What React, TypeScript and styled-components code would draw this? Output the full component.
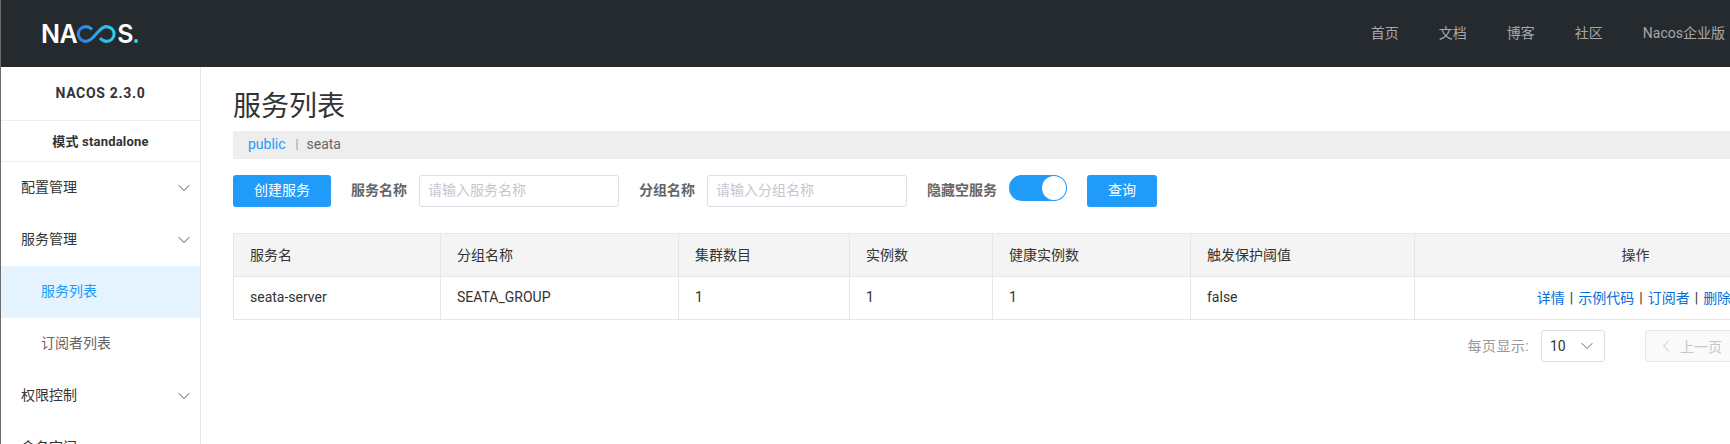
import { createGlobalStyle, styled } from "styled-components";
import { ChevronDown, ChevronLeft } from "lucide-react";

const FONT = `Roboto, "Noto Sans CJK SC", sans-serif`;

const menu = [
  { label: "配置管理" },
  {
    label: "服务管理",
    children: [
      { label: "服务列表", active: true },
      { label: "订阅者列表" },
    ],
  },
  { label: "权限控制" },
  { label: "命名空间" },
];

const navLinks = ["首页", "文档", "博客", "社区", "Nacos企业版"];

const columns = [
  { title: "服务名", width: 207, value: "seata-server" },
  { title: "分组名称", width: 238, value: "SEATA_GROUP" },
  { title: "集群数目", width: 171, value: "1" },
  { title: "实例数", width: 143, value: "1" },
  { title: "健康实例数", width: 198, value: "1" },
  { title: "触发保护阈值", width: 224, value: "false" },
];

const actions = ["详情", "示例代码", "订阅者", "删除"];

const App = () => {
  return (
    <>
      <GlobalStyle />
      <Page>
        <Header>
          <Logo>
            NA
            <svg width="42" height="18" viewBox="0 0 46 20" fill="none">
              <defs>
                <linearGradient id="loop" x1="0" x2="1" y1="0" y2="0">
                  <stop offset="0" stopColor="#2a7ff0" />
                  <stop offset="1" stopColor="#2fd0e6" />
                </linearGradient>
              </defs>
              <path
                d="M17.5 5C15.5 3 13.4 1.8 10.6 1.8 6 1.8 2.2 5.4 2.2 10s3.8 8.2 8.4 8.2c3.6 0 6-2.2 8.4-4.8l5.6-6.2C27.2 4.4 29.6 1.8 33.6 1.8c4.6 0 8.4 3.6 8.4 8.2s-3.8 8.2-8.4 8.2c-3.2 0-5.4-1.6-7.4-3.6"
                stroke="url(#loop)"
                strokeWidth="3.4"
              />
            </svg>
            S<LogoDot />
          </Logo>
          <Nav>
            {navLinks.map((link) => (
              <NavLink key={link}>{link}</NavLink>
            ))}
          </Nav>
        </Header>
        <Body>
          <Sidebar>
            <Version>NACOS 2.3.0</Version>
            <Mode>模式 standalone</Mode>
            {menu.map((item) => (
              <div key={item.label}>
                <MenuItem>
                  {item.label}
                  <ChevronDown size={20} strokeWidth={1.2} color="#555" />
                </MenuItem>
                {item.children?.map((child) => (
                  <SubItem key={child.label} $active={child.active}>
                    {child.label}
                  </SubItem>
                ))}
              </div>
            ))}
          </Sidebar>
          <Main>
            <Title>服务列表</Title>
            <Crumbs>
              <CrumbLink>public</CrumbLink>
              <CrumbSep>|</CrumbSep>
              <span>seata</span>
            </Crumbs>
            <Toolbar>
              <Button $width={98}>创建服务</Button>
              <FieldLabel>服务名称</FieldLabel>
              <SearchInput placeholder="请输入服务名称" />
              <FieldLabel>分组名称</FieldLabel>
              <SearchInput placeholder="请输入分组名称" />
              <FieldLabel>隐藏空服务</FieldLabel>
              <Switch>
                <Knob />
              </Switch>
              <Button $width={70}>查询</Button>
            </Toolbar>
            <Table>
              <colgroup>
                {columns.map((col) => (
                  <col key={col.title} width={col.width} />
                ))}
                <col width={442} />
              </colgroup>
              <thead>
                <tr>
                  {columns.map((col) => (
                    <HeadCell key={col.title}>{col.title}</HeadCell>
                  ))}
                  <HeadCell $center>操作</HeadCell>
                </tr>
              </thead>
              <tbody>
                <tr>
                  {columns.map((col) => (
                    <Cell key={col.title}>{col.value}</Cell>
                  ))}
                  <ActionCell>
                    {actions.map((action, index) => (
                      <span key={action}>
                        {index > 0 && <ActionSep>|</ActionSep>}
                        <ActionLink>{action}</ActionLink>
                      </span>
                    ))}
                  </ActionCell>
                </tr>
              </tbody>
            </Table>
            <Pagination>
              <PageLabel>每页显示:</PageLabel>
              <PageSize>
                10
                <ChevronDown size={20} strokeWidth={1.2} color="#666" />
              </PageSize>
              <PrevButton>
                <ChevronLeft size={20} strokeWidth={1.2} color="#c4c6cf" />
                上一页
              </PrevButton>
            </Pagination>
          </Main>
        </Body>
      </Page>
    </>
  );
};

const GlobalStyle = createGlobalStyle`
  html, body {
    margin: 0;
    height: 100%;
    overflow: hidden;
    background: #fff;
  }
  * {
    box-sizing: border-box;
  }
  input::placeholder {
    color: #c4c6cf;
  }
`;

const Page = styled.div`
  width: 1730px;
  height: 444px;
  overflow: hidden;
  border-left: 1px solid #6b6b6b;
  font-family: ${FONT};
  font-size: 14px;
  color: #333;
`;

const Header = styled.header`
  height: 67px;
  display: flex;
  align-items: center;
  justify-content: space-between;
  padding: 0 5px 0 40px;
  background-color: #252a2f;
`;

const Logo = styled.div`
  display: flex;
  align-items: center;
  font-family: Inter, sans-serif;
  font-size: 25px;
  font-weight: 600;
  letter-spacing: -0.5px;
  color: #fff;
  svg {
    margin: 0 -1px 0 -1px;
  }
`;

const LogoDot = styled.i`
  width: 4px;
  height: 4px;
  margin: 14px 0 0 1px;
  border-radius: 50%;
  background-color: #2fd0e6;
`;

const Nav = styled.nav`
  display: flex;
  gap: 40px;
  padding-bottom: 4px;
`;

const NavLink = styled.a`
  color: #a8a8a8;
  font-size: 14px;
`;

const Body = styled.div`
  display: flex;
  height: 377px;
`;

const Sidebar = styled.aside`
  flex: 0 0 200px;
  border-right: 1px solid #e6e6e6;
`;

const Version = styled.div`
  height: 54px;
  display: flex;
  align-items: center;
  justify-content: center;
  padding-bottom: 2px;
  border-bottom: 1px solid #eee;
  font-weight: 700;
  font-size: 14px;
  letter-spacing: 0.7px;
`;

const Mode = styled(Version)`
  height: 41px;
  font-size: 13px;
  letter-spacing: 0.2px;
`;

const MenuItem = styled.div`
  height: 52px;
  display: flex;
  align-items: center;
  justify-content: space-between;
  padding: 0 6px 4px 20px;
  font-size: 14px;
  svg {
    margin-top: 4px;
  }
`;

const SubItem = styled.div<{ $active?: boolean }>`
  height: 52px;
  display: flex;
  align-items: center;
  padding: 0 0 4px 40px;
  color: ${(props) => (props.$active ? "#209bfa" : "#666")};
  background-color: ${(props) => (props.$active ? "#e4f3fe" : "transparent")};
`;

const Main = styled.main`
  flex: 0 0 auto;
  width: 1655px;
  padding-left: 32px;
`;

const Title = styled.h1`
  height: 64px;
  margin: 0;
  display: flex;
  align-items: center;
  padding-top: 10px;
  font-size: 28px;
  font-weight: 400;
`;

const Crumbs = styled.div`
  height: 28px;
  display: flex;
  align-items: center;
  padding: 0 0 2px 15px;
  background-color: #eee;
  color: #666;
`;

const CrumbLink = styled.a`
  color: #209bfa;
`;

const CrumbSep = styled.span`
  margin: 0 8px 0 10px;
  color: #999;
  font-size: 12px;
`;

const Toolbar = styled.div`
  display: flex;
  align-items: flex-start;
  gap: 12px;
  margin-top: 16px;
`;

const Button = styled.button<{ $width: number }>`
  width: ${(props) => props.$width}px;
  height: 32px;
  margin-right: 8px;
  padding: 0 0 4px;
  border: none;
  border-radius: 3px;
  background-color: #209bfa;
  color: #fff;
  font-family: ${FONT};
  font-size: 14px;
`;

const FieldLabel = styled.label`
  line-height: 30px;
  font-weight: 700;
  color: #666;
`;

const SearchInput = styled.input`
  width: 200px;
  height: 32px;
  margin-right: 8px;
  padding: 0 8px 2px;
  border: 1px solid #dcdee3;
  border-radius: 3px;
  font-family: ${FONT};
  font-size: 14px;
  outline: none;
`;

const Switch = styled.div`
  width: 58px;
  height: 26px;
  margin-right: 8px;
  display: flex;
  align-items: center;
  justify-content: flex-end;
  padding-right: 1px;
  border-radius: 13px;
  background-color: #209bfa;
`;

const Knob = styled.span`
  width: 24px;
  height: 24px;
  border-radius: 50%;
  background-color: #fff;
`;

const Table = styled.table`
  width: 1623px;
  margin-top: 26px;
  table-layout: fixed;
  border-collapse: collapse;
  border: 1px solid #e6e6e6;
`;

const HeadCell = styled.th<{ $center?: boolean }>`
  height: 43px;
  padding: 0 16px 3px;
  border: 1px solid #e6e6e6;
  background-color: #f4f4f4;
  font-weight: 400;
  text-align: ${(props) => (props.$center ? "center" : "left")};
`;

const Cell = styled.td`
  height: 43px;
  padding: 0 16px 3px;
  border: 1px solid #e6e6e6;
  text-align: left;
`;

const ActionCell = styled(Cell)`
  padding-right: 19px;
  text-align: center;
`;

const ActionLink = styled.a`
  color: #0a6ed8;
`;

const ActionSep = styled.span`
  margin: 0 5px;
`;

const Pagination = styled.div`
  width: 1623px;
  display: flex;
  align-items: center;
  justify-content: flex-end;
  margin-top: 10px;
  padding-right: 119px;
`;

const PageLabel = styled.span`
  margin-right: 12px;
  padding-bottom: 2px;
  color: #999;
  letter-spacing: 0.4px;
`;

const PageSize = styled.div`
  width: 64px;
  height: 32px;
  display: flex;
  align-items: center;
  justify-content: space-between;
  padding: 0 7px 0 8px;
  border: 1px solid #dcdee3;
  border-radius: 3px;
`;

const PrevButton = styled.button`
  width: 92px;
  height: 32px;
  margin-left: 40px;
  display: flex;
  align-items: center;
  gap: 4px;
  padding: 0 0 0 10px;
  border: 1px solid #e6e7eb;
  border-radius: 3px;
  background-color: #fafafa;
  color: #c4c6cf;
  font-family: ${FONT};
  font-size: 14px;
  white-space: nowrap;
`;

export default App;
